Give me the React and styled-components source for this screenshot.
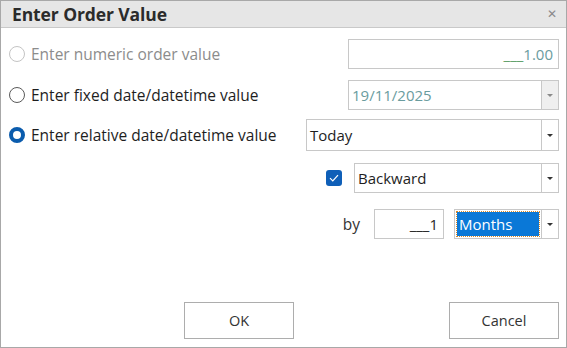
import React from 'react';
import styled, { createGlobalStyle } from 'styled-components';

const GlobalStyle = createGlobalStyle`
  html, body { margin: 0; padding: 0; background: #ffffff; }
  * { box-sizing: border-box; }
`;

const Window = styled.div`
  width: 567px;
  height: 348px;
  border: 1px solid #a8a8a8;
  background: #ffffff;
  display: flex;
  flex-direction: column;
  font-family: "Open Sans", "Noto Sans", sans-serif;
  font-size: 14px;
  color: #1e1e1e;
`;

const TitleBar = styled.div`
  height: 27px;
  flex: none;
  background: #e6e6e6;
  border-bottom: 1px solid #c9c9c9;
  display: flex;
  align-items: center;
  justify-content: space-between;
  padding: 0 9px 0 11px;
`;

const Title = styled.div`
  font-weight: 700;
  font-size: 17.5px;
  color: #2b2b2b;
  letter-spacing: -0.1px;
`;

const Close = styled.span`
  color: #8a8a8a;
  font-size: 12px;
  line-height: 1;
`;

const Body = styled.div`
  flex: 1;
  display: flex;
  flex-direction: column;
  padding: 11px 7px 8px 8px;
`;

const Row = styled.div`
  display: flex;
  align-items: center;
  justify-content: ${(p) => (p.$end ? 'flex-end' : 'space-between')};
  height: ${(p) => p.$h || 30}px;
  margin-top: ${(p) => p.$mt || 0}px;
`;

const Group = styled.div`
  display: flex;
  align-items: center;
  gap: ${(p) => p.$gap || 0}px;
`;

const RadioLabel = styled.label`
  display: flex;
  align-items: center;
  gap: 6px;
  color: ${(p) => (p.$disabled ? '#8c8c8c' : '#1e1e1e')};
  font-size: 15.5px;
`;

const RadioDot = styled.span`
  width: 16px;
  height: 16px;
  border-radius: 50%;
  flex: none;
  border: ${(p) => (p.$on ? '4px solid #0b5cad' : `1px solid ${p.$disabled ? '#c4c4c4' : '#5a5a5a'}`)};
  background: #ffffff;
`;

const Field = styled.div`
  width: ${(p) => p.$w}px;
  height: ${(p) => p.$h || 30}px;
  margin-left: ${(p) => p.$ml || 0}px;
  border: 1px solid #c8c8c8;
  background: #ffffff;
  display: flex;
  align-items: stretch;
`;

const FieldText = styled.div`
  flex: 1;
  display: flex;
  align-items: center;
  justify-content: ${(p) => (p.$right ? 'flex-end' : 'flex-start')};
  padding: ${(p) => (p.$right ? '0 5px 0 0' : '0 3px')};
  font-size: 15px;
  color: ${(p) => p.$color || '#1e1e1e'};
  white-space: nowrap;
`;

const Under = styled.span`
  color: ${(p) => p.$color};
`;

const DropButton = styled.div`
  width: 17px;
  flex: none;
  border-left: 1px solid #c8c8c8;
  background: ${(p) => (p.$disabled ? '#efefef' : '#ffffff')};
  display: flex;
  align-items: center;
  justify-content: center;
`;

const Arrow = styled.span`
  width: 0;
  height: 0;
  border-left: 3px solid transparent;
  border-right: 3px solid transparent;
  border-top: 3px solid ${(p) => (p.$disabled ? '#8a8a8a' : '#333333')};
`;

const Selected = styled.div`
  flex: 1;
  margin: 2px;
  background: #0a78d7;
  outline: 1px dotted #d98a2a;
  color: #ffffff;
  font-size: 15px;
  display: flex;
  align-items: center;
  padding: 0 2px;
`;

const Check = styled.span`
  width: 16px;
  height: 16px;
  border-radius: 3px;
  background: #0f5fb8;
  display: flex;
  align-items: center;
  justify-content: center;
`;

const By = styled.span`
  font-size: 15.5px;
  color: #333333;
  margin-right: 14px;
`;

const Spacer = styled.div`
  flex: 1;
`;

const Footer = styled.div`
  display: flex;
  justify-content: space-between;
  padding-left: 175px;
`;

const Button = styled.button`
  width: 110px;
  height: 37px;
  border: 1px solid #adadad;
  background: #ffffff;
  font-family: inherit;
  font-size: 14.5px;
  color: #333333;
  padding: 0;
`;

function Combo({ w, h, text, color, disabled }) {
  return (
    <Field $w={w} $h={h}>
      <FieldText $color={color}>{text}</FieldText>
      <DropButton $disabled={disabled}><Arrow $disabled={disabled} /></DropButton>
    </Field>
  );
}

export default function App() {
  return (
    <>
      <GlobalStyle />
      <Window>
        <TitleBar>
          <Title>Enter Order Value</Title>
          <Close>✕</Close>
        </TitleBar>
        <Body>
          <Row>
            <RadioLabel $disabled><RadioDot $disabled />Enter numeric order value</RadioLabel>
            <Field $w={211}>
              <FieldText $right $color="#6a9c9e"><Under $color="#5f9f6a">___</Under>1.00</FieldText>
            </Field>
          </Row>
          <Row $mt={11}>
            <RadioLabel><RadioDot />Enter fixed date/datetime value</RadioLabel>
            <Combo w={211} text="19/11/2025" color="#6a9c9e" disabled />
          </Row>
          <Row $mt={9} $h={32}>
            <RadioLabel><RadioDot $on />Enter relative date/datetime value</RadioLabel>
            <Combo w={253} h={32} text="Today" />
          </Row>
          <Row $mt={12} $end>
            <Group $gap={12}>
              <Check>
                <svg width="10" height="8" viewBox="0 0 10 8">
                  <path d="M1 4.2 L3.8 7 L9 1.2" fill="none" stroke="#ffffff" strokeWidth="1.2" />
                </svg>
              </Check>
              <Combo w={205} text="Backward" />
            </Group>
          </Row>
          <Row $mt={16} $end>
            <Group>
              <By>by</By>
              <Field $w={70}>
                <FieldText $right>___1</FieldText>
              </Field>
              <Field $w={105} $ml={10}>
                <Selected>Months</Selected>
                <DropButton><Arrow /></DropButton>
              </Field>
            </Group>
          </Row>
          <Spacer />
          <Footer>
            <Button>OK</Button>
            <Button>Cancel</Button>
          </Footer>
        </Body>
      </Window>
    </>
  );
}
